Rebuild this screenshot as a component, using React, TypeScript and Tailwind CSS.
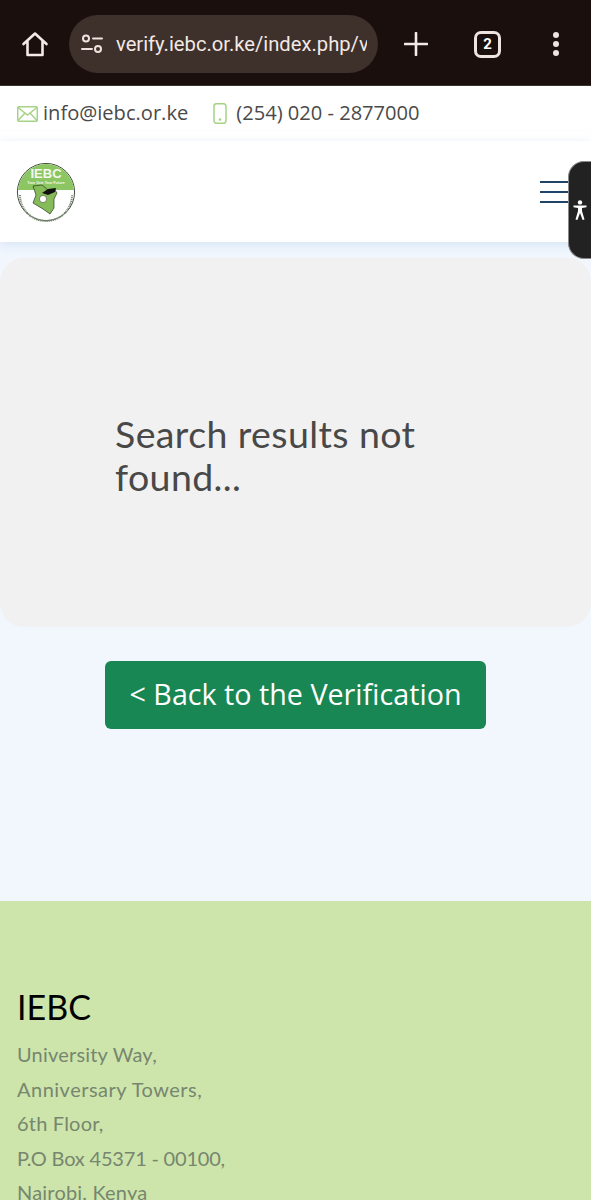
import React from "react";

function Logo() {
  return (
    <svg width="60" height="60" viewBox="0 0 60 60">
      <defs>
        <clipPath id="top"><rect x="0" y="0" width="60" height="28" /></clipPath>
      </defs>
      <circle cx="30" cy="30" r="28.6" fill="#fff" stroke="#2f3a2a" strokeWidth="0.9" />
      <circle cx="30" cy="30" r="28" fill="#8cc663" clipPath="url(#top)" />
      <text x="30" y="15.5" textAnchor="middle" fontSize="13" fontWeight="700" fill="#f4f8ee" fontFamily="Liberation Sans">IEBC</text>
      <text x="30" y="22" textAnchor="middle" fontSize="3.6" fontWeight="700" fill="#f4f8ee" fontFamily="Liberation Sans">Your Vote Your Future</text>
      <path d="M17 24 L26 23 L32 28 L39 28 L41 31 L38 37 L38 46 L34 52 L27 47 L17 41 L20 33 Z" fill="#86bb5a" stroke="#2b3a1f" strokeWidth="0.7" />
      <circle cx="27" cy="37" r="3.6" fill="#fff" stroke="#333" strokeWidth="0.5" />
      <path d="M26 31 L32 27 L40 26 L39 30 L32 33 Z" fill="#111" />
      <path d="M4 33 A26 26 0 0 0 56 33" fill="none" stroke="#7c8a74" strokeWidth="2" strokeDasharray="1.2 0.7" />
    </svg>
  );
}

export default function App() {
  return (
    <div className="h-[1200px] w-[591px] overflow-hidden bg-[#f2f7fe] font-['Open_Sans',sans-serif]">
      {/* browser bar */}
      <div className="flex h-[86px] items-center border-b border-[#3a3533] bg-[#1a0f0d] pt-[3px]">
        <div className="flex w-[69px] justify-center">
          <svg width="28" height="28" viewBox="0 0 28 28" fill="none" stroke="#f3e9e5" strokeWidth="2.6" strokeLinejoin="round" strokeLinecap="round">
            <path d="M2.5 14 L14 3.5 L25.5 14 M6.5 11.5 V25 H21.5 V11.5" />
          </svg>
        </div>
        <div className="flex h-[58px] w-[309px] items-center overflow-hidden rounded-full bg-[#3e302b] pl-[12px]">
          <svg width="22" height="20" viewBox="0 0 22 20" fill="none" stroke="#eee3de" strokeWidth="2" className="shrink-0">
            <circle cx="5" cy="4.5" r="3" />
            <path d="M12 4.5 H21 M1 15 H11" strokeLinecap="round" />
            <circle cx="17" cy="15" r="3" />
          </svg>
          <div className="ml-[13px] w-[251px] shrink-0 overflow-hidden font-['Roboto',sans-serif] text-[20.2px] leading-[24px] whitespace-nowrap text-[#f2e9e5]">verify.iebc.or.ke/index.php/v</div>
        </div>
        <div className="flex flex-1 items-center pl-[26px]">
          <svg width="24" height="24" viewBox="0 0 24 24" stroke="#f3e9e5" strokeWidth="2.6" strokeLinecap="round">
            <path d="M12 1 V23 M1 12 H23" />
          </svg>
          <div className="ml-[46px] flex h-[27px] w-[27px] items-center justify-center rounded-[7px] border-[3px] border-[#eee3de] font-['Roboto',sans-serif] text-[15px] font-bold leading-none text-white">2</div>
          <div className="ml-[52px] flex flex-col gap-[3px]">
            <div className="h-[6px] w-[6px] rounded-full bg-[#eee3de]" />
            <div className="h-[6px] w-[6px] rounded-full bg-[#eee3de]" />
            <div className="h-[6px] w-[6px] rounded-full bg-[#eee3de]" />
          </div>
        </div>
      </div>

      {/* contact bar */}
      <div className="flex h-[55px] items-center bg-white pl-[17px] text-[20.1px] text-[#4a4a4a]">
        <svg width="21" height="16" viewBox="0 0 21 16" fill="none" stroke="#a5d386" strokeWidth="1.5">
          <rect x="0.7" y="0.7" width="19.6" height="14.6" rx="1.5" />
          <path d="M1 1.5 L10.5 9 L20 1.5 M1 14.5 L8 7 M20 14.5 L13 7" />
        </svg>
        <span className="ml-[5px]">info@iebc.or.ke</span>
        <svg width="14" height="21" viewBox="0 0 14 21" fill="none" stroke="#a5d386" strokeWidth="1.5" className="ml-[25px]">
          <rect x="1" y="0.7" width="12" height="19.6" rx="2.5" />
          <circle cx="7" cy="16.5" r="0.6" fill="#a5d386" />
        </svg>
        <span className="ml-[9px]">(254) 020 - 2877000</span>
      </div>

      {/* nav */}
      <div className="relative flex h-[101px] items-center justify-between bg-white pl-[16px] pr-[23px] shadow-[0_3px_10px_rgba(190,210,235,0.5)]">
        <Logo />
        <div className="flex w-[28px] flex-col gap-[8px]">
          <div className="h-[2px] bg-[#1f4468]" />
          <div className="h-[2px] bg-[#1f4468]" />
          <div className="h-[2px] bg-[#1f4468]" />
        </div>
        <div className="absolute right-0 top-[20px] flex h-[98px] w-[23px] items-center justify-center rounded-l-[16px] border border-r-0 border-[#8a8a8a] bg-[#222222]">
          <svg width="14" height="20" viewBox="0 0 14 20" fill="#fff">
            <circle cx="7" cy="2.4" r="2.2" />
            <path d="M0.5 5.5 L13.5 5.5 L13.5 7.2 L9 8 L9 11 L11.5 19.5 L9.6 20 L7 13 L4.4 20 L2.5 19.5 L5 11 L5 8 L0.5 7.2 Z" />
          </svg>
        </div>
      </div>

      {/* card */}
      <div className="mt-[16px] flex h-[369px] items-center rounded-[24px] bg-[#f1f1f1] pl-[115px] pr-[150px] pt-[25px]">
        <h1 className="font-['Lato',sans-serif] text-[37.5px] leading-[43px] font-normal tracking-[0.4px] text-[#484848]">Search results not found...</h1>
      </div>

      {/* button */}
      <div className="mt-[34px] flex justify-center">
        <div className="flex h-[68px] w-[381px] items-center justify-center rounded-[6px] bg-[#198754] pb-[2px] text-[28.7px] text-white">&lt; Back to the Verification</div>
      </div>

      {/* footer */}
      <div className="mt-[172px] h-[400px] bg-[#cde5ab] pl-[17px] pt-[83px]">
        <div className="font-['Lato',sans-serif] text-[34px] leading-[46px] text-black">IEBC</div>
        <div className="mt-[7px] font-['Lato',sans-serif] text-[20px] leading-[34.5px] text-[#77866f]">
          <div className="tracking-[0.2px]">University Way,</div>
          <div className="tracking-[0.5px]">Anniversary Towers,</div>
          <div className="tracking-[0.2px]">6th Floor,</div>
          <div className="tracking-[-0.2px]">P.O Box 45371 - 00100,</div>
          <div className="tracking-[0.2px]">Nairobi, Kenya</div>
        </div>
      </div>
    </div>
  );
}
